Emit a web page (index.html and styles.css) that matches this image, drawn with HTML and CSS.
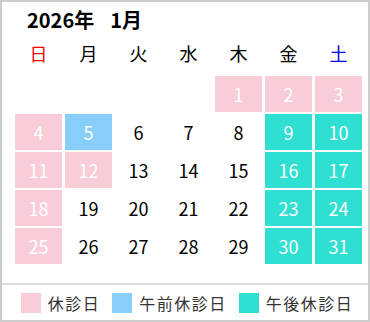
FILE: index.html
```html
<!DOCTYPE html>
<html lang="ja">
<head>
<meta charset="utf-8">
<link rel="stylesheet" href="styles.css">
</head>
<body>
<div class="cal">
  <div class="title">2026年<span class="month">1月</span></div>
  <div class="week">
    <div class="wd sun">日</div><div class="wd">月</div><div class="wd">火</div><div class="wd">水</div><div class="wd">木</div><div class="wd">金</div><div class="wd sat">土</div>
  </div>
  <div class="days">
    <div class="d"></div><div class="d"></div><div class="d"></div><div class="d"></div><div class="d off">1</div><div class="d off">2</div><div class="d off">3</div>
    <div class="d off">4</div><div class="d am">5</div><div class="d">6</div><div class="d">7</div><div class="d">8</div><div class="d pm">9</div><div class="d pm">10</div>
    <div class="d off">11</div><div class="d off">12</div><div class="d">13</div><div class="d">14</div><div class="d">15</div><div class="d pm">16</div><div class="d pm">17</div>
    <div class="d off">18</div><div class="d">19</div><div class="d">20</div><div class="d">21</div><div class="d">22</div><div class="d pm">23</div><div class="d pm">24</div>
    <div class="d off">25</div><div class="d">26</div><div class="d">27</div><div class="d">28</div><div class="d">29</div><div class="d pm">30</div><div class="d pm">31</div>
  </div>
  <div class="legend">
    <div class="item"><span class="sw off"></span><span class="lbl">休診日</span></div>
    <div class="item"><span class="sw am"></span><span class="lbl">午前休診日</span></div>
    <div class="item"><span class="sw pm"></span><span class="lbl">午後休診日</span></div>
  </div>
</div>
</body>
</html>
```
FILE: styles.css
```css
html, body {
  margin: 0;
  padding: 0;
  background: #fff;
}
body {
  font-family: "Noto Sans CJK JP", "Noto Sans", sans-serif;
  color: #000;
}
.cal {
  width: 366px;
  height: 318px;
  border: 2px solid #cccccc;
  display: flex;
  flex-direction: column;
  background: #fff;
}
.title {
  margin-top: 6px;
  padding-left: 25px;
  font-size: 20px;
  font-weight: bold;
  line-height: 24px;
  height: 24px;
}
.month {
  margin-left: 16px;
}
.week, .days {
  display: grid;
  grid-template-columns: repeat(7, 47px);
  column-gap: 3px;
  margin-left: 13px;
}
.week {
  margin-top: 9px;
  height: 24px;
}
.wd {
  text-align: center;
  font-size: 18px;
  line-height: 24px;
}
.wd.sun { color: #ff0000; }
.wd.sat { color: #0000ff; }
.days {
  margin-top: 11px;
  grid-auto-rows: 36px;
  row-gap: 2px;
}
.d {
  text-align: center;
  font-size: 18px;
  line-height: 36px;
}
.d.off, .d.am, .d.pm { color: #fff; }
.off { background: #f9cdd8; }
.am { background: #87cefa; }
.pm { background: #2fe0d2; }
.legend {
  margin-top: auto;
  border-top: 2px solid #dddddd;
  height: 35px;
  padding-left: 4px;
  display: flex;
  align-items: center;
  justify-content: center;
  gap: 12px;
}
.item {
  display: flex;
  align-items: center;
  gap: 7px;
}
.sw {
  width: 20px;
  height: 20px;
  display: block;
}
.lbl {
  font-size: 16px;
  line-height: 20px;
  letter-spacing: 1.5px;
  color: #333;
}
```
